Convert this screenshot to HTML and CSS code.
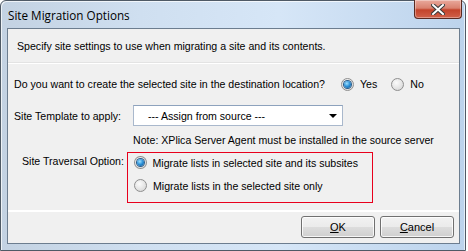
FILE: index.html
```html
<!DOCTYPE html>
<html lang="en">
<head>
    <meta charset="UTF-8">
    <title>Site Migration Options</title>
    <link rel="stylesheet" href="styles.css">
</head>
<body>
    <div class="window">
        <div class="titlebar">
            <span class="title">Site Migration Options</span>
            <div class="close-btn">
                <svg width="14" height="11" viewBox="0 0 14 11">
                    <path d="M2 1 L12 10 M12 1 L2 10" stroke="#3a3a3a" stroke-width="4" stroke-linecap="square"/>
                    <path d="M2 1 L12 10 M12 1 L2 10" stroke="#ffffff" stroke-width="2" stroke-linecap="square"/>
                </svg>
            </div>
        </div>
        <div class="client">
            <div class="header">Specify site settings to use when migrating a site and its contents.</div>
            <div class="content">
                <div class="row create-row">
                    <span class="question">Do you want to create the selected site in the destination location?</span>
                    <label class="radio-label"><span class="radio checked"></span>Yes</label>
                    <label class="radio-label"><span class="radio"></span>No</label>
                </div>
                <div class="row template-row">
                    <span class="field-label">Site Template to apply:</span>
                    <div class="combo">
                        <span>--- Assign from source ---</span>
                        <span class="arrow"></span>
                    </div>
                </div>
                <div class="note">Note: XPlica Server Agent must be installed in the source server</div>
                <div class="row traversal-row">
                    <span class="traversal-label">Site Traversal Option:</span>
                    <div class="traversal-box">
                        <label class="radio-label"><span class="radio checked"></span>Migrate lists in selected site and its subsites</label>
                        <label class="radio-label"><span class="radio"></span>Migrate lists in the selected site only</label>
                    </div>
                </div>
            </div>
            <div class="footer">
                <button class="btn"><u>O</u>K</button>
                <button class="btn"><u>C</u>ancel</button>
            </div>
        </div>
    </div>
</body>
</html>
```

FILE: styles.css
```css
* {
    margin: 0;
    padding: 0;
    box-sizing: border-box;
}

body {
    width: 468px;
    height: 251px;
    background: #ffffff;
    font-family: 'Liberation Sans', Arial, sans-serif;
    font-size: 10.6px;
    color: #000000;
    overflow: hidden;
    white-space: nowrap;
}

.window {
    width: 466px;
    height: 251px;
    display: flex;
    flex-direction: column;
    border: 1px solid #4f5a66;
    border-radius: 6px 6px 0 0;
    background: linear-gradient(90deg, #c3d2e2 0%, #cfdff0 30%, #d6e6f7 60%, #bcd3ec 100%);
    box-shadow: inset 1px 1px 0 rgba(255, 255, 255, 0.7), inset -1px 0 0 rgba(255, 255, 255, 0.6);
}

.titlebar {
    height: 27px;
    display: flex;
    align-items: flex-start;
    justify-content: space-between;
    padding-left: 7px;
}

.title {
    font-family: 'Open Sans', 'Liberation Sans', sans-serif;
    font-size: 11.7px;
    margin-top: 6px;
    color: #000000;
}

.close-btn {
    width: 48px;
    height: 19px;
    margin-top: -1px;
    margin-right: 3px;
    border: 1px solid #5a2a22;
    border-top: none;
    border-radius: 0 0 4px 4px;
    background: linear-gradient(180deg, #e9a99c 0%, #d9816f 45%, #c3432b 55%, #d0614a 100%);
    box-shadow: inset 0 0 0 1px rgba(255, 255, 255, 0.35);
    display: flex;
    align-items: center;
    justify-content: center;
}

.client {
    flex: 1;
    margin: 0 5px 6px 6px;
    border: 1px solid #6c7d8f;
    background: #f0f0f0;
    display: flex;
    flex-direction: column;
}

.header {
    height: 35px;
    padding: 11px 0 0 9px;
    border-bottom: 1px solid #ffffff;
    box-shadow: 0 -1px 0 #e3e3e3 inset;
}

.content {
    flex: 1;
    padding: 12px 0 0 6px;
    border-bottom: 2px solid #ffffff;
}

.row {
    display: flex;
    align-items: center;
}

.create-row {
    height: 16px;
}

.question {
    width: 327px;
}

.radio-label {
    display: flex;
    align-items: center;
    margin-right: 14px;
}

.radio {
    width: 13px;
    height: 13px;
    border-radius: 50%;
    border: 1px solid #8f8f8f;
    background: radial-gradient(circle at 40% 35%, #fbfbfb 0%, #e2e2e2 60%, #cfcfcf 100%);
    margin-right: 6px;
    position: relative;
}

.radio.checked::after {
    content: "";
    position: absolute;
    left: 2px;
    top: 2px;
    width: 7px;
    height: 7px;
    border-radius: 50%;
    background: radial-gradient(circle at 40% 35%, #9fe0ff 0%, #2a8fd6 50%, #0c4f8c 100%);
    box-shadow: 0 0 0 1px #2a5c8a;
}

.template-row {
    margin-top: 13px;
}

.field-label {
    width: 119px;
}

.combo {
    width: 210px;
    height: 21px;
    background: #ffffff;
    border: 1px solid #a9b8cc;
    border-top-color: #8da2bd;
    display: flex;
    align-items: center;
    justify-content: space-between;
    padding: 0 5px 0 14px;
}

.arrow {
    width: 0;
    height: 0;
    border-left: 4px solid transparent;
    border-right: 4px solid transparent;
    border-top: 4px solid #000000;
}

.note {
    margin: 8px 0 0 119px;
}

.traversal-row {
    align-items: flex-start;
    margin-top: 6px;
}

.traversal-label {
    width: 113px;
    padding: 3px 0 0 8px;
}

.traversal-box {
    width: 246px;
    height: 51px;
    border: 1px solid #e8001c;
    padding: 3px 0 0 6px;
    display: flex;
    flex-direction: column;
    gap: 10px;
}

.footer {
    height: 31px;
    display: flex;
    justify-content: flex-end;
    gap: 5px;
    padding: 4px 5px 0 0;
}

.btn {
    width: 74px;
    height: 22px;
    font-family: 'Liberation Sans', Arial, sans-serif;
    font-size: 11px;
    border: 1px solid #707070;
    border-radius: 3px;
    background: linear-gradient(180deg, #f2f2f2 0%, #ebebeb 49%, #dddddd 50%, #cfcfcf 100%);
    box-shadow: inset 0 0 0 1px rgba(255, 255, 255, 0.8);
    color: #000000;
}
```
